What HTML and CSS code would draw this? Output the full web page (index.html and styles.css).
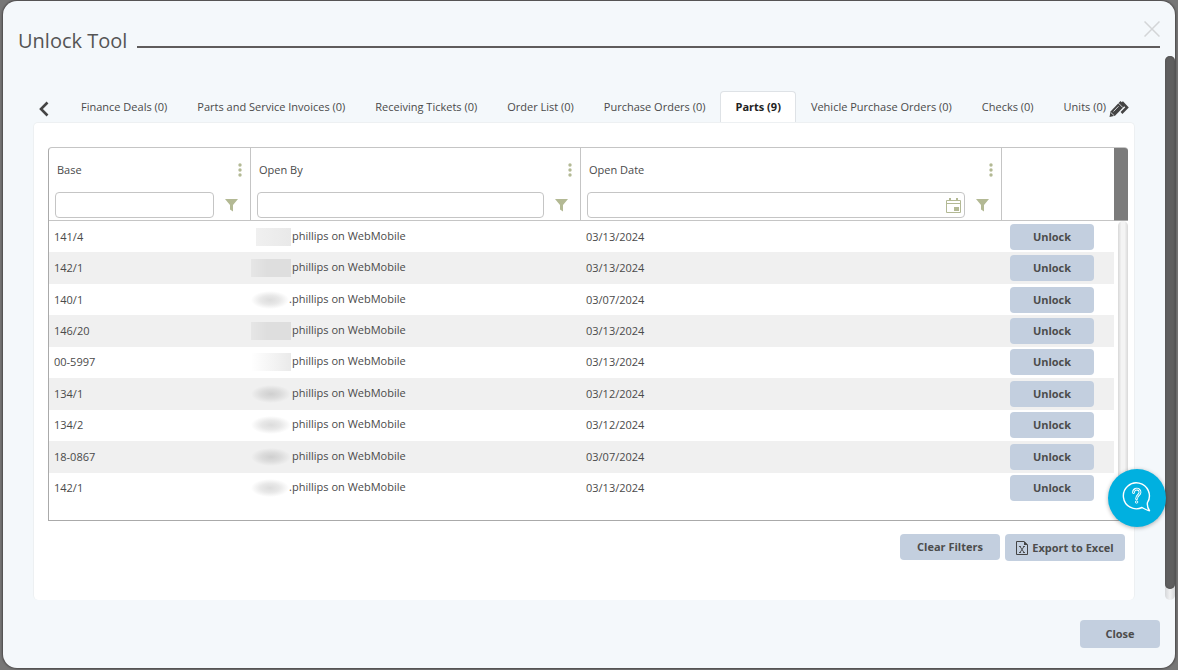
FILE: index.html
```html
<!DOCTYPE html>
<html lang="en">
<head>
<meta charset="utf-8">
<title>Unlock Tool</title>
<link rel="stylesheet" href="styles.css">
</head>

<body>
  <div class="modal" role="dialog" aria-labelledby="modal_title">
    <div class="modal_head">
      <h1 id="modal_title">Unlock Tool</h1>
      <span class="rule"></span>
      <button type="button" class="icon_btn close_x" aria-label="Close window">
        <svg width="16" height="16" viewBox="0 0 16 16"><path d="M.5.5l15 15M15.500.5L.5 15.500" stroke="#d3d5d7" stroke-width="1.500" fill="none"/></svg>
      </button>
    </div>

    <div class="modal_body">
      <div class="content">
        <div class="tabs">
          <button type="button" class="icon_btn prev" aria-label="Previous tabs">
            <svg width="12" height="16" viewBox="0 0 12 16"><path d="M9.500 1.500L3 8l6.500 6.500" stroke="#444" stroke-width="2.600" fill="none"/></svg>
          </button>
          <ul>
            <li><a href="#">Finance Deals (0)</a></li>
            <li><a href="#">Parts and Service Invoices (0)</a></li>
            <li><a href="#">Receiving Tickets (0)</a></li>
            <li><a href="#">Order List (0)</a></li>
            <li><a href="#">Purchase Orders (0)</a></li>
            <li><a href="#" class="active">Parts (9)</a></li>
            <li><a href="#">Vehicle Purchase Orders (0)</a></li>
            <li><a href="#">Checks (0)</a></li>
            <li><a href="#">Units (0)</a></li>
          </ul>
          <button type="button" class="icon_btn next" aria-label="Next tabs">
            <svg width="20" height="18" viewBox="0 0 20 18">
              <path d="M13 2l5 5.500-5.500 5.500" stroke="#444" stroke-width="2.600" fill="none"/>
              <path d="M.5 17l1-5.500L11.500 1l4.500 4.500L6 15.700z" fill="#444"/>
              <path d="M9.500 3.200l4.300 4.300M4.500 11.500l5-5.200M1.800 12.500l3.400 3.200" stroke="#f4f8fb" stroke-width=".8" fill="none"/>
            </svg>
          </button>
        </div>

        <div class="panel">
          <div class="grid">
            <table>
              <colgroup>
                <col class="c_base"><col class="c_by"><col class="c_date"><col class="c_act">
              </colgroup>
              <thead>
                <tr>
                  <th scope="col">
                    <div class="th_top"><label for="f_base">Base</label><button type="button" class="icon_btn" aria-label="Base menu"><svg width="4" height="14" viewBox="0 0 4 14" fill="#b3b994"><circle cx="2" cy="2" r="1.700"/><circle cx="2" cy="7" r="1.700"/><circle cx="2" cy="12" r="1.700"/></svg></button></div>
                    <div class="th_filter"><input type="text" id="f_base"><button type="button" class="icon_btn" aria-label="Filter Base"><svg width="13" height="13" viewBox="0 0 13 13"><path d="M0 0h13L8 6v6.500L5 10.500V6z" fill="#b3b994"/></svg></button></div>
                  </th>
                  <th scope="col">
                    <div class="th_top"><label for="f_by">Open By</label><button type="button" class="icon_btn" aria-label="Open By menu"><svg width="4" height="14" viewBox="0 0 4 14" fill="#b3b994"><circle cx="2" cy="2" r="1.700"/><circle cx="2" cy="7" r="1.700"/><circle cx="2" cy="12" r="1.700"/></svg></button></div>
                    <div class="th_filter"><input type="text" id="f_by"><button type="button" class="icon_btn" aria-label="Filter Open By"><svg width="13" height="13" viewBox="0 0 13 13"><path d="M0 0h13L8 6v6.500L5 10.500V6z" fill="#b3b994"/></svg></button></div>
                  </th>
                  <th scope="col">
                    <div class="th_top"><label for="f_date">Open Date</label><button type="button" class="icon_btn" aria-label="Open Date menu"><svg width="4" height="14" viewBox="0 0 4 14" fill="#b3b994"><circle cx="2" cy="2" r="1.700"/><circle cx="2" cy="7" r="1.700"/><circle cx="2" cy="12" r="1.700"/></svg></button></div>
                    <div class="th_filter">
                      <div class="date_box">
                        <input type="text" id="f_date">
                        <button type="button" class="icon_btn" aria-label="Pick a date"><svg width="15" height="15" viewBox="0 0 15 15"><path d="M.5 2.500h14v12H.5zM.5 5.500h14" stroke="#b3b994" fill="none"/><path d="M3 0h2v3H3zM10 0h2v3h-2zM8 9h5v4H8z" fill="#b3b994"/></svg></button>
                      </div>
                      <button type="button" class="icon_btn" aria-label="Filter Open Date"><svg width="13" height="13" viewBox="0 0 13 13"><path d="M0 0h13L8 6v6.500L5 10.500V6z" fill="#b3b994"/></svg></button>
                    </div>
                  </th>
                  <td class="th_blank"></td>
                </tr>
              </thead>
              <tbody>
                <tr><td>141/4</td><td class="by"><span class="lead"><i class="mask flat short"></i></span>phillips on WebMobile</td><td>03/13/2024</td><td class="act"><button type="button" class="btn">Unlock</button></td></tr>
                <tr><td>142/1</td><td class="by"><span class="lead"><i class="mask flat dark"></i></span>phillips on WebMobile</td><td>03/13/2024</td><td class="act"><button type="button" class="btn">Unlock</button></td></tr>
                <tr><td>140/1</td><td class="by"><span class="lead dot"><i class="mask"></i>.</span>phillips on WebMobile</td><td>03/07/2024</td><td class="act"><button type="button" class="btn">Unlock</button></td></tr>
                <tr><td>146/20</td><td class="by"><span class="lead"><i class="mask flat dark"></i></span>phillips on WebMobile</td><td>03/13/2024</td><td class="act"><button type="button" class="btn">Unlock</button></td></tr>
                <tr><td>00-5997</td><td class="by"><span class="lead"><i class="mask pale"></i></span>phillips on WebMobile</td><td>03/13/2024</td><td class="act"><button type="button" class="btn">Unlock</button></td></tr>
                <tr><td>134/1</td><td class="by"><span class="lead"><i class="mask deep"></i></span>phillips on WebMobile</td><td>03/12/2024</td><td class="act"><button type="button" class="btn">Unlock</button></td></tr>
                <tr><td>134/2</td><td class="by"><span class="lead"><i class="mask"></i></span>phillips on WebMobile</td><td>03/12/2024</td><td class="act"><button type="button" class="btn">Unlock</button></td></tr>
                <tr><td>18-0867</td><td class="by"><span class="lead"><i class="mask deep"></i></span>phillips on WebMobile</td><td>03/07/2024</td><td class="act"><button type="button" class="btn">Unlock</button></td></tr>
                <tr><td>142/1</td><td class="by"><span class="lead dot"><i class="mask"></i>.</span>phillips on WebMobile</td><td>03/13/2024</td><td class="act"><button type="button" class="btn">Unlock</button></td></tr>
              </tbody>
            </table>
            <div class="gutter">
              <div class="gutter_head"></div>
              <div class="gutter_bar"></div>
            </div>
          </div>
          <div class="tools">
            <button type="button" class="btn clear">Clear Filters</button>
            <button type="button" class="btn export">
              <svg width="12" height="14" viewBox="0 0 12 14"><path d="M.5.5h7.500l3.500 3.500v9.500H.5z" stroke="#444" fill="none"/><path d="M8 0l4 4H8z" fill="#444"/><path d="M4 5.500l4 6M8 5.500l-4 6M3 5.500h2M7 5.500h2M3 11.500h2M7 11.500h2" stroke="#444" stroke-width=".9" fill="none"/></svg>
              Export to Excel
            </button>
          </div>
        </div>
      </div>
      <div class="scroll"><div class="thumb"></div></div>
    </div>

    <div class="modal_foot">
      <button type="button" class="btn close">Close</button>
    </div>
  </div>

  <button type="button" class="help" aria-label="Help">
    <svg width="30" height="32" viewBox="0 0 30 32" fill="none" stroke="#fff" stroke-width="1.400">
      <path d="M20 25.500A13 13 0 1 1 25.500 20.500C25 23 26 26.500 27.500 28.700C25 28.500 22.500 27 20 25.500z" stroke-linejoin="round"/>
      <path d="M11.500 10.500c0-4.500 6.500-4.500 6.500-.3 0 2.900-3.400 2.900-3.400 6.500" stroke-width="2.800" stroke-linecap="round"/>
      <path d="M11.500 10.500c0-4.500 6.500-4.500 6.500-.3 0 2.900-3.400 2.900-3.400 6.500" stroke="#00b0e0" stroke-width=".9" stroke-linecap="round"/>
      <circle cx="14.600" cy="20" r="1.200" stroke-width=".9"/>
    </svg>
  </button>
</body>
</html>
```
FILE: styles.css
```css
* {margin:0;padding:0;box-sizing:border-box}
ul,li {list-style:none}
body {background:#777;font:11px/16px "Open Sans","Noto Sans",sans-serif;color:#4a4a4a}
button,input {font:inherit;color:inherit}
button {cursor:pointer}
a {color:inherit;text-decoration:none}
svg {display:block}
.icon_btn {border:0;background:none;flex:none}

.modal {display:flex;flex-direction:column;min-height:calc(100vh - 3px);margin:1px 3px 2px;background:#f4f8fb;border-radius:14px;box-shadow:0 0 2px 1px #4a4848}

.modal_head {display:flex;align-items:center;position:relative;height:55px;padding:24px 15px 0}
.modal_head h1 {font-size:20px;line-height:32px;font-weight:400;color:#555}
.rule {flex:1;height:2px;margin:12px 0 0 10px;background:#5f5c5c}
.close_x {position:absolute;right:15px;top:20px}

.modal_body {display:flex;flex:1}
.content {flex:1;display:flex;flex-direction:column;padding:35px 30px 0;min-width:0}
.scroll {flex:none;width:10px;border-radius:5px;background:linear-gradient(90deg,#d5d7d9,#f0f1f2,#d5d7d9);padding-bottom:11px}
.thumb {height:100%;border-radius:5px;background:#5f5f5f;box-shadow:inset 0 0 2px #444}

.tabs {display:flex;align-items:center;height:31px;padding:0 6px 0 5px}
.tabs ul {display:flex;flex:1;min-width:0;margin-left:16px;white-space:nowrap}
.tabs a {display:block;height:31px;padding:7px 14px 0;border:1px solid transparent;border-bottom:0}
.tabs .active {background:#fff;border-color:#dee2e6;border-radius:4px 4px 0 0;font-weight:700;color:#222}
.prev,.next {padding-top:4px}

.panel {flex:1;background:#fff;border:1px solid #edf0f2;border-bottom:0;border-radius:5px;padding:24px 6px 0 14px}
.grid {display:flex;border:1px solid #c5c5c5;border-right:0;border-left-color:#aaa;border-bottom-color:#aaa;border-radius:4px 4px 0 0;padding-bottom:16px}
table {flex:1;min-width:0;border-collapse:separate;border-spacing:0;table-layout:fixed;height:356px}
.c_base {width:202px}
.c_by {width:330px}
.c_act {width:112px}
th,.th_blank {height:73px;border-bottom:1px solid #c5c5c5;text-align:left;font-weight:400;vertical-align:top}
th {border-right:1px solid #c5c5c5}
.th_top {display:flex;justify-content:space-between;align-items:center;height:44px;padding:0 8px 1px}
.th_filter {display:flex;align-items:center;padding:0 12px 2px 6px;gap:11px}
input {flex:1;min-width:0;width:100%;height:26px;border:1px solid #c5c5c5;border-radius:4px;background:#fff;padding:0 6px;outline:0}
.date_box {position:relative;flex:1;display:flex}
.date_box .icon_btn {position:absolute;right:4px;top:6px}

tbody td {padding:0 5px;vertical-align:middle}
tbody tr:nth-child(even) {background:#f0f0f0}
tbody .by {padding:0;white-space:nowrap}
tbody .act {padding:0 8px}
.lead {display:inline-flex;justify-content:flex-end;width:41px;padding-right:1px;vertical-align:top}
.lead.dot {padding-right:0}
.mask {width:40px;height:18px;background:radial-gradient(farthest-side,#dcdcdc,#e8e8e8 50%,transparent)}
.mask.flat {background:linear-gradient(90deg,#f0f0f0,#e9e9e9)}
.mask.dark {background:linear-gradient(90deg,#e6e6e6,#dedede 40%)}
.mask.short {width:35px}
.mask.pale {background:linear-gradient(90deg,transparent,#eaeaea)}
.mask.deep {background:radial-gradient(farthest-side,#cfcfcf,#dcdcdc 50%,transparent)}

.btn {border:0;border-radius:4px;background:#c3cfdf;font-weight:700;color:#4c4c4c;height:26px}
.act .btn {display:block;width:84px}

.gutter {flex:none;width:14px;display:flex;flex-direction:column;margin-bottom:-16px}
.gutter_head {height:73px;background:#7b7b7b;border-bottom:1px solid #aaa;border-radius:0 3px 0 0}
.gutter_bar {flex:1;margin-left:4px;border-radius:5px;background:linear-gradient(90deg,#d8d8d8,#f4f4f4 35%,#f4f4f4 65%,#d8d8d8)}

.tools {display:flex;justify-content:flex-end;gap:5px;padding:13px 3px 0 0}
.clear {width:100px}
.export {display:flex;align-items:center;justify-content:center;gap:4px;width:120px;height:27px}

.modal_foot {display:flex;justify-content:flex-end;padding:20px 15px}
.close {width:80px;height:28px}

.help {position:fixed;right:12px;bottom:143px;display:flex;align-items:center;justify-content:center;width:58px;height:58px;border:0;border-radius:50%;background:#00b0e0;box-shadow:0 1px 4px rgba(0,0,0,.3)}
```
